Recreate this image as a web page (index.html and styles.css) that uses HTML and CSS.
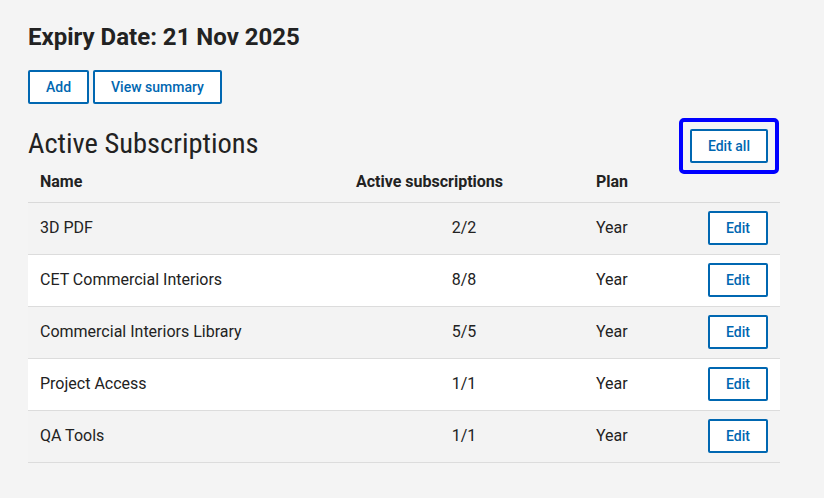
FILE: index.html
```html
<!DOCTYPE html>
<html lang="en">
<head>
<meta charset="utf-8">
<title>Subscriptions</title>
<link rel="stylesheet" href="styles.css">
</head>
<body>
<main class="page">
  <h1 class="title">Expiry Date: 21 Nov 2025</h1>
  <div class="actions">
    <button class="btn">Add</button>
    <button class="btn">View summary</button>
  </div>
  <div class="section-head">
    <h2 class="section-title">Active Subscriptions</h2>
    <button class="btn btn-focus">Edit all</button>
  </div>
  <table class="subs">
    <colgroup>
      <col class="c-name">
      <col class="c-active">
      <col class="c-plan">
      <col class="c-action">
    </colgroup>
    <thead>
      <tr>
        <th>Name</th>
        <th>Active subscriptions</th>
        <th>Plan</th>
        <th></th>
      </tr>
    </thead>
    <tbody>
      <tr><td>3D PDF</td><td class="num">2/2</td><td>Year</td><td class="act"><button class="btn">Edit</button></td></tr>
      <tr><td>CET Commercial Interiors</td><td class="num">8/8</td><td>Year</td><td class="act"><button class="btn">Edit</button></td></tr>
      <tr><td>Commercial Interiors Library</td><td class="num">5/5</td><td>Year</td><td class="act"><button class="btn">Edit</button></td></tr>
      <tr><td>Project Access</td><td class="num">1/1</td><td>Year</td><td class="act"><button class="btn">Edit</button></td></tr>
      <tr><td>QA Tools</td><td class="num">1/1</td><td>Year</td><td class="act"><button class="btn">Edit</button></td></tr>
    </tbody>
  </table>
</main>
</body>
</html>
```
FILE: styles.css
```css
html, body {
  margin: 0;
  padding: 0;
  background: #f4f4f4;
}
body {
  font-family: Roboto, "Liberation Sans", sans-serif;
  color: #222;
}
.page {
  width: 752px;
  padding: 23px 0 0 28px;
}
.title {
  margin: 0;
  font-size: 24px;
  line-height: 28px;
  font-weight: 700;
}
.actions {
  margin-top: 19px;
  display: flex;
  gap: 4px;
}
.btn {
  font-family: Roboto, "Liberation Sans", sans-serif;
  font-size: 14px;
  font-weight: 500;
  color: #0067b1;
  background: #fff;
  border: 2px solid #0067b1;
  border-radius: 2px;
  height: 34px;
  padding: 0 16px;
  line-height: 30px;
  cursor: pointer;
}
.section-head {
  margin-top: 25px;
  display: flex;
  justify-content: space-between;
  align-items: center;
  padding-right: 12px;
}
.section-title {
  margin: 0;
  font-family: "Liberation Sans Narrow", "Roboto Condensed", "DejaVu Sans Condensed", Roboto, sans-serif;
  font-size: 28.5px;
  font-weight: 400;
  line-height: 30px;
  color: #222;
  position: relative;
  top: -2px;
}
.btn-focus {
  position: relative;
}
.btn-focus::after {
  content: "";
  position: absolute;
  inset: -13px;
  border: 4px solid #0000ff;
  border-radius: 5px;
}
.subs {
  width: 752px;
  border-collapse: separate;
  border-spacing: 0;
  font-size: 16px;
  table-layout: fixed;
}
.c-name { width: 316px; }
.c-active { width: 240px; }
.c-plan { width: 112px; }
.c-action { width: 84px; }
.subs th {
  text-align: left;
  font-weight: 700;
  padding: 7px 12px 8px;
  line-height: 24px;
  border-bottom: 1px solid #d9d9d9;
}
.subs td {
  padding: 8px 12px 9px;
  line-height: 24px;
  height: 34px;
  border-bottom: 1px solid #dcdcdc;
}
.subs tbody tr:nth-child(odd) td { background: #f3f3f3; }
.subs tbody tr:nth-child(even) td { background: #fff; }
.subs td.num { text-align: center; }
.subs td.act { text-align: right; }
```
